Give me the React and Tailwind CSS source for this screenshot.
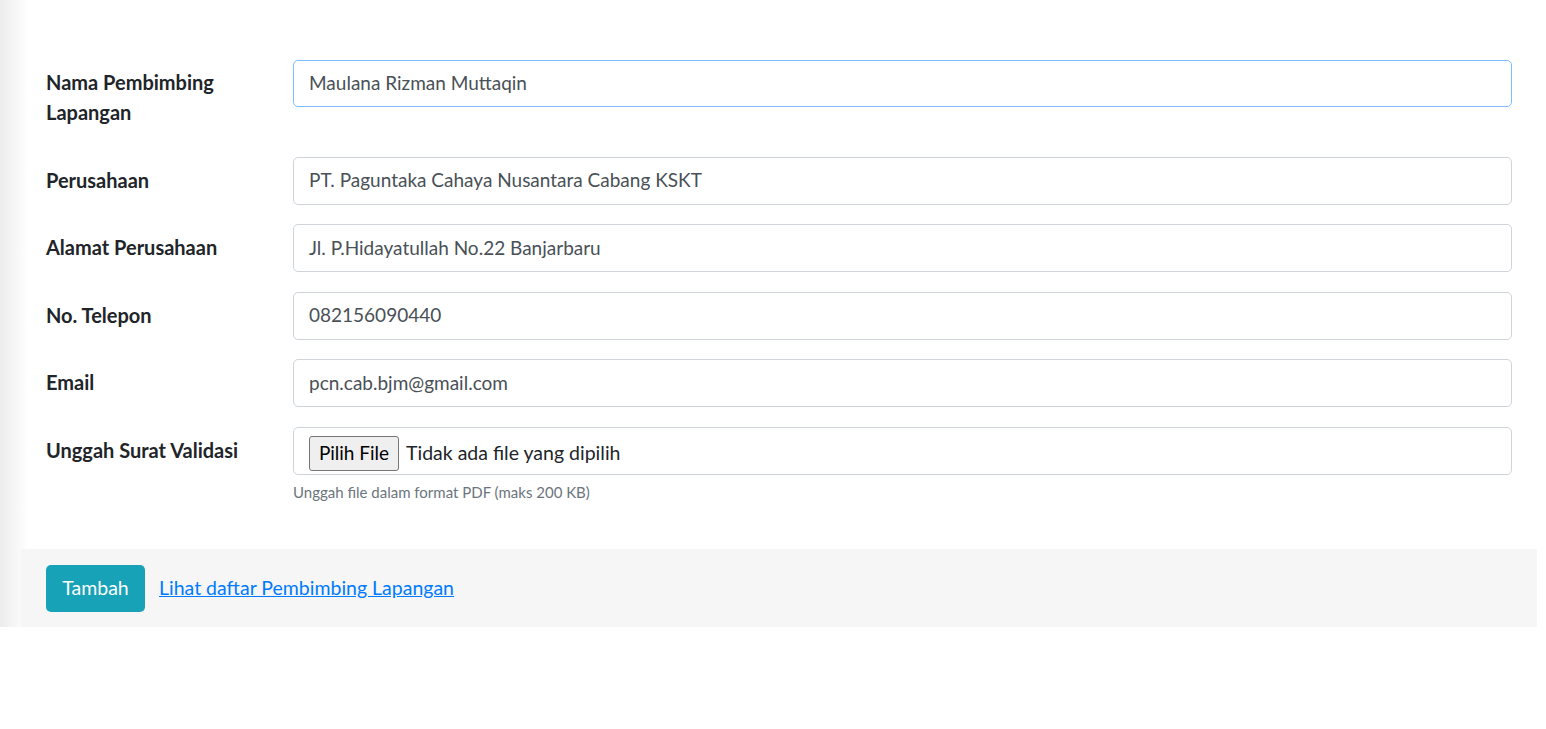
export default function App() {
  const rows = [
    ["Perusahaan", "PT. Paguntaka Cahaya Nusantara Cabang KSKT"],
    ["Alamat Perusahaan", "Jl. P.Hidayatullah No.22 Banjarbaru"],
    ["No. Telepon", "082156090440"],
    ["Email", "pcn.cab.bjm@gmail.com"],
  ];
  return (
    <div className="min-h-[729px] bg-white font-['Lato',sans-serif]">
      <div className="h-[627px] bg-[linear-gradient(to_right,#ececec,#ffffff_28px)] pl-[21px] pr-[9px] flex flex-col">
        <div className="flex-1 px-[25px] pt-[60px] flex flex-col gap-[19.5px]">
          <div className="grid grid-cols-[247px_1fr]">
            <label className="pt-[7px] pb-[10px] text-[20px] leading-[30px] font-bold text-[#212529] w-[190px]">
              Nama Pembimbing Lapangan
            </label>
            <div className="h-[47px] rounded-[5px] border border-[#80bdff] px-[15px] flex items-center text-[19px] text-[#495057]">
              Maulana Rizman Muttaqin
            </div>
          </div>
          {rows.map(([l, v]) => (
            <div key={l} className="grid grid-cols-[247px_1fr]">
              <label className="pt-[8px] text-[20px] leading-[30px] font-bold text-[#212529]">{l}</label>
              <div className="h-[48px] rounded-[5px] border border-[#ced4da] px-[15px] flex items-center text-[19px] text-[#495057]">
                {v}
              </div>
            </div>
          ))}
          <div className="grid grid-cols-[247px_1fr]">
            <label className="pt-[8px] text-[20px] leading-[30px] font-bold text-[#212529]">Unggah Surat Validasi</label>
            <div>
              <div className="h-[48px] rounded-[5px] border border-[#ced4da] px-[15px] flex items-center text-[19.5px] text-[#212529]">
                <span className="mt-[5px] h-[35px] w-[90px] justify-center flex items-center bg-[#efefef] border border-[#767676] rounded-[3px] text-black text-[19px] mr-[7px]">
                  Pilih File
                </span>
                <span className="mt-[5px]">Tidak ada file yang dipilih</span>
              </div>
              <div className="mt-[6px] text-[15px] leading-[22px] text-[#6c757d]">
                Unggah file dalam format PDF (maks 200 KB)
              </div>
            </div>
          </div>
        </div>
        <div className="h-[78px] bg-[#f6f6f6] px-[25px] flex items-center gap-[14px]">
          <button className="h-[47px] w-[99px] rounded-[5px] bg-[#17a2b8] text-white text-[19.5px]">Tambah</button>
          <a href="#" className="text-[19.5px] text-[#007bff] underline">Lihat daftar Pembimbing Lapangan</a>
        </div>
      </div>
    </div>
  );
}
